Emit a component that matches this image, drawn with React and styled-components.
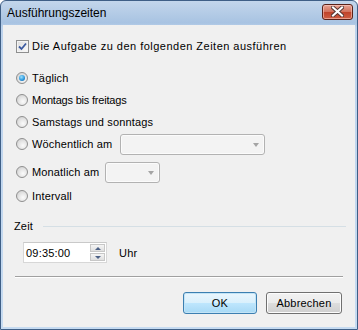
import React from 'react';
import styled, { createGlobalStyle } from 'styled-components';

const Global = createGlobalStyle`
  html, body { margin: 0; padding: 0; background: #ffffff; }
  body { width: 358px; height: 330px; overflow: hidden; }
`;

const Window = styled.div`
  box-sizing: border-box;
  width: 358px;
  height: 330px;
  display: flex;
  flex-direction: column;
  border: 1px solid #3f5f86;
  border-radius: 6px 6px 0 0;
  background: linear-gradient(#c3d6eb, #a8c3e2 22px, #bcd2ec 26px, #c6dbf1);
  overflow: hidden;
  font-family: "Liberation Sans", Arial, sans-serif;
  font-size: 11px;
  color: #000;
`;

const TitleBar = styled.div`
  height: 24px;
  flex: none;
  display: flex;
  align-items: center;
  justify-content: space-between;
  padding: 0 4px 0 6px;
`;

const Title = styled.span`
  font-size: 12px;
  color: #000;
`;

const CloseButton = styled.div`
  box-sizing: border-box;
  width: 31px;
  height: 16px;
  margin-top: -3px;
  border: 1px solid #5a2219;
  border-radius: 3px;
  background: linear-gradient(#e8a494, #d2725d 48%, #c0432a 52%, #cf5f44);
  box-shadow: inset 0 0 0 1px rgba(255, 210, 200, 0.55);
  display: flex;
  align-items: center;
  justify-content: center;
`;

const Client = styled.div`
  flex: 1;
  margin: 0 2px 2px 2px;
  background: #f0f0f0;
  display: flex;
  flex-direction: column;
  padding-top: 10px;
`;

const Row = styled.div`
  height: 22px;
  flex: none;
  display: flex;
  align-items: center;
  margin-top: ${p => p.$mt || 0}px;
  padding-left: 13px;
`;

const IndicatorSlot = styled.span`
  width: 16px;
  height: 13px;
  flex: none;
  display: flex;
  align-items: center;
`;

const CheckBox = styled.span`
  box-sizing: border-box;
  width: 13px;
  height: 13px;
  border: 1px solid #8e8f8f;
  background: linear-gradient(135deg, #dcdcdc, #fbfbfb);
  box-shadow: inset 0 0 0 1px #f4f4f4;
  display: flex;
  align-items: center;
  justify-content: center;
`;

const RadioDot = styled.span`
  box-sizing: border-box;
  width: 12px;
  height: 12px;
  border-radius: 50%;
  border: 1px solid #8f8f8f;
  background: radial-gradient(circle at 60% 65%, #fbfbfb 0%, #e6e6e6 45%, #c9c9c9 100%);
  display: flex;
  align-items: center;
  justify-content: center;
  &::after {
    content: '';
    display: ${p => (p.$on ? 'block' : 'none')};
    width: 6px;
    height: 6px;
    border-radius: 50%;
    background: radial-gradient(circle at 40% 35%, #9ee0fb 0%, #2d9ae0 55%, #0b4d8c 100%);
  }
`;

const Label = styled.span`
  white-space: nowrap;
  flex: none;
  letter-spacing: ${p => p.$ls ?? 0.15}px;
  width: ${p => (p.$w ? `${p.$w}px` : 'auto')};
`;

const Combo = styled.div`
  box-sizing: border-box;
  width: ${p => p.$w}px;
  height: 21px;
  border: 1px solid #b2b2b2;
  border-radius: 3px;
  background: #f3f3f3;
  box-shadow: inset 0 0 0 1px #fbfbfb;
  display: flex;
  align-items: center;
  justify-content: flex-end;
  padding-right: 5px;
`;

const Arrow = styled.span`
  width: 0;
  height: 0;
  border-left: 3.5px solid transparent;
  border-right: 3.5px solid transparent;
  border-top: 4px solid #a4a4a4;
  margin-top: 1px;
`;

const SectionHeader = styled.div`
  height: 16px;
  display: flex;
  align-items: center;
  margin-top: 11px;
  padding-left: 11px;
  padding-right: 9px;
  gap: 10px;
`;

const Rule = styled.span`
  flex: 1;
  height: 1px;
  background: #d5dfe5;
  margin-top: 1px;
`;

const TimeRow = styled.div`
  height: 21px;
  display: flex;
  align-items: center;
  margin-top: 8px;
  padding-left: 20px;
`;

const TimeBox = styled.div`
  box-sizing: border-box;
  width: 84px;
  height: 21px;
  background: #fff;
  border: 1px solid #d7d7d7;
  border-top-color: #c9c9c9;
  display: flex;
  align-items: center;
  padding-left: 2px;
  padding-right: 1px;
`;

const TimeText = styled.span`
  flex: 1;
  letter-spacing: 0.2px;
`;

const Spin = styled.div`
  display: flex;
  flex-direction: column;
  gap: 1px;
`;

const SpinButton = styled.div`
  box-sizing: border-box;
  width: 15px;
  height: 8px;
  border: 1px solid #c7c7c7;
  background: linear-gradient(#f5f5f5, #dfdfdf);
  display: flex;
  align-items: center;
  justify-content: center;
`;

const SpinArrow = styled.span`
  width: 0;
  height: 0;
  border-left: 3px solid transparent;
  border-right: 3px solid transparent;
  ${p => (p.$up ? 'border-bottom: 3px solid #4d6185;' : 'border-top: 3px solid #4d6185;')}
`;

const Unit = styled.span`
  margin-left: 12px;
  letter-spacing: 0.2px;
`;

const Separator = styled.div`
  height: 1px;
  margin: 13px 12px 0 12px;
  background: #a0a0a0;
  border-bottom: 1px solid #ffffff;
`;

const ButtonBar = styled.div`
  display: flex;
  justify-content: flex-end;
  gap: 9px;
  margin-top: 14px;
  padding-right: 13px;
`;

const Button = styled.div`
  box-sizing: border-box;
  width: ${p => p.$w}px;
  height: 22px;
  border-radius: 3px;
  border: 1px solid ${p => (p.$default ? '#3c7fb1' : '#707070')};
  background: ${p =>
    p.$default
      ? 'linear-gradient(#eaf6fd, #d9f0fc 50%, #bee6fd 51%, #a7d9f5)'
      : 'linear-gradient(#f2f2f2, #ebebeb 50%, #dddddd 51%, #cfcfcf)'};
  box-shadow: inset 0 0 0 1px ${p => (p.$default ? '#c3e4f6' : '#fcfcfc')};
  display: flex;
  align-items: center;
  justify-content: center;
  letter-spacing: 0.2px;
`;

function Check() {
  return (
    <svg width="9" height="9" viewBox="0 0 9 9">
      <path d="M1 4.5 L3.5 7 L8 1.5" fill="none" stroke="#3b5aa0" strokeWidth="1.8" />
    </svg>
  );
}

function CloseX() {
  return (
    <svg width="13" height="11" viewBox="0 0 13 11">
      <path d="M2 1.5 L11 9.5 M11 1.5 L2 9.5" stroke="#5a3a36" strokeWidth="4" strokeLinecap="square" />
      <path d="M2 1.5 L11 9.5 M11 1.5 L2 9.5" stroke="#ffffff" strokeWidth="2" strokeLinecap="square" />
    </svg>
  );
}

function Radio({ on, label, mt, ls, w, children }) {
  return (
    <Row $mt={mt}>
      <IndicatorSlot>
        <RadioDot $on={on} />
      </IndicatorSlot>
      <Label $ls={ls} $w={w}>{label}</Label>
      {children}
    </Row>
  );
}

export default function App() {
  return (
    <>
      <Global />
      <Window>
        <TitleBar>
          <Title>Ausführungszeiten</Title>
          <CloseButton>
            <CloseX />
          </CloseButton>
        </TitleBar>
        <Client>
          <Row>
            <IndicatorSlot>
              <CheckBox>
                <Check />
              </CheckBox>
            </IndicatorSlot>
            <Label $ls={0.48}>Die Aufgabe zu den folgenden Zeiten ausführen</Label>
          </Row>
          <Radio on label="Täglich" mt={10} />
          <Radio label="Montags bis freitags" ls={-0.2} />
          <Radio label="Samstags und sonntags" />
          <Radio label="Wöchentlich am" w={88}>
            <Combo $w={145}>
              <Arrow />
            </Combo>
          </Radio>
          <Radio label="Monatlich am" mt={6} w={73}>
            <Combo $w={55}>
              <Arrow />
            </Combo>
          </Radio>
          <Radio label="Intervall" mt={2} />
          <SectionHeader>
            <Label>Zeit</Label>
            <Rule />
          </SectionHeader>
          <TimeRow>
            <TimeBox>
              <TimeText>09:35:00</TimeText>
              <Spin>
                <SpinButton>
                  <SpinArrow $up />
                </SpinButton>
                <SpinButton>
                  <SpinArrow />
                </SpinButton>
              </Spin>
            </TimeBox>
            <Unit>Uhr</Unit>
          </TimeRow>
          <Separator />
          <ButtonBar>
            <Button $default $w={74}>OK</Button>
            <Button $w={76}>Abbrechen</Button>
          </ButtonBar>
        </Client>
      </Window>
    </>
  );
}
